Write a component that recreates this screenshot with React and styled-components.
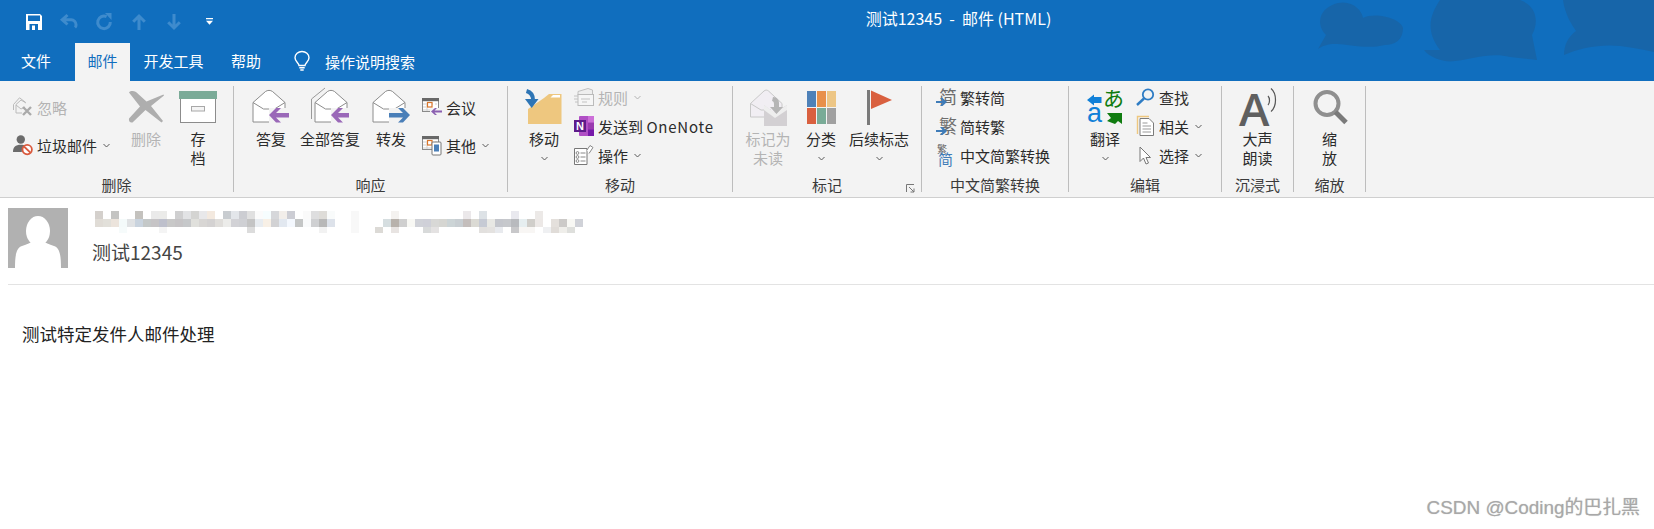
import React from "react";
import styled, { createGlobalStyle } from "styled-components";

const Global = createGlobalStyle`
  html, body { margin: 0; padding: 0; background: #fff; }
  body { font-family: "Noto Sans CJK SC", "Noto Sans", sans-serif; overflow: hidden; }
  svg { display: block; overflow: visible; }
`;

const Page = styled.div`
  position: relative;
  width: 1654px;
  height: 529px;
  overflow: hidden;
  background: #fff;
`;
const Chrome = styled.header`
  position: relative;
  background: #106ebe;
  height: 81px;
  display: flex;
  flex-direction: column;
`;
const Clouds = styled.svg`
  position: absolute;
  top: 0;
  right: 0;
`;
const TitleBar = styled.div`
  position: relative;
  height: 43px;
  display: flex;
  align-items: center;
`;
const Qat = styled.div`
  display: flex;
  align-items: center;
  padding-left: 26px;
`;
const QatSlot = styled.span`
  display: block;
  margin-left: ${p => p.$ml}px;
`;
const Title = styled.div`
  position: absolute;
  left: 0;
  right: 0;
  top: 8px;
  text-align: center;
  padding-left: 263px;
  font-size: 16px;
  line-height: 20px;
  color: #fff;
  white-space: pre;
`;
const TabBar = styled.nav`
  position: relative;
  height: 38px;
  display: flex;
  align-items: stretch;
`;
const Tab = styled.div`
  width: ${p => p.$w}px;
  box-sizing: border-box;
  padding-bottom: 3px;
  padding-right: ${p => p.$pr || 0}px;
  display: flex;
  align-items: center;
  justify-content: center;
  font-size: 15px;
  color: ${p => (p.$active ? "#106ebe" : "#fff")};
  background: ${p => (p.$active ? "#f3f3f3" : "transparent")};
`;
const Search = styled.div`
  display: flex;
  align-items: center;
  margin-left: 18px;
  padding-bottom: 2px;
  gap: 15px;
  font-size: 15px;
  color: #fff;
`;
const Ribbon = styled.section`
  height: 111px;
  padding-top: 5px;
  box-sizing: content-box;
  background: #f3f3f3;
  border-bottom: 1px solid #cfcfcf;
  display: flex;
  align-items: flex-start;
`;
const Group = styled.div`
  position: relative;
  flex: none;
  box-sizing: border-box;
  width: ${p => p.$w}px;
  height: 106px;
  border-right: 1px solid #bdbdbd;
  display: flex;
  flex-direction: column;
`;
const GroupBody = styled.div`
  flex: none;
  height: 89.5px;
  display: flex;
  align-items: flex-start;
  justify-content: ${p => (p.$center ? "center" : "flex-start")};
  padding-left: ${p => p.$pl || 0}px;
`;
const GroupLabel = styled.div`
  height: 18px;
  line-height: 18px;
  font-size: 15px;
  color: #3a3a3a;
  text-align: center;
  white-space: nowrap;
`;
const Launcher = styled.svg`
  position: absolute;
  right: 6px;
  bottom: -1px;
`;
const Big = styled.div`
  flex: none;
  width: ${p => p.$w}px;
  margin-left: ${p => p.$ml || 0}px;
  display: flex;
  flex-direction: column;
  align-items: center;
  font-size: 15px;
  line-height: 19px;
  color: ${p => (p.$off ? "#b4b4b4" : "#2b2b2b")};
`;
const BigIcon = styled.div`
  position: relative;
  height: 42.5px;
  display: flex;
  align-items: center;
  justify-content: center;
`;
const Line = styled.div`
  height: 19px;
  white-space: nowrap;
`;
const ChevronSlot = styled.div`
  height: 19px;
  margin-top: 1.5px;
  display: flex;
  align-items: center;
`;
const Stack = styled.div`
  flex: none;
  width: ${p => (p.$w ? `${p.$w}px` : "auto")};
  margin-left: ${p => p.$ml || 0}px;
  margin-top: ${p => p.$top || 0}px;
  display: flex;
  flex-direction: column;
  gap: ${p => p.$gap}px;
`;
const Row = styled.div`
  height: 26px;
  display: flex;
  align-items: center;
  font-size: 15px;
  white-space: pre;
  color: ${p => (p.$off ? "#b4b4b4" : "#2b2b2b")};
`;
const Latin = styled.span`
  letter-spacing: 0.8px;
`;
const RowIcon = styled.span`
  position: relative;
  flex: none;
  width: 20px;
  height: 20px;
  margin-right: 4px;
  display: flex;
  align-items: center;
  justify-content: center;
`;
const ChevronWrap = styled.span`
  margin-left: ${p => p.$ml || 6}px;
`;
const CharGlyph = styled.span`
  position: absolute;
  left: ${p => p.$x}px;
  top: ${p => p.$y}px;
  font-size: ${p => p.$size}px;
  line-height: 1;
  color: ${p => p.$color};
  font-family: ${p => p.$family || '"Noto Sans CJK SC", sans-serif'};
`;
const CharArrow = styled.svg`
  position: absolute;
  left: ${p => p.$x}px;
  top: ${p => p.$y}px;
`;
const Composite = styled.div`
  position: relative;
  width: ${p => p.$w}px;
  height: ${p => p.$h}px;
`;
const MessageHead = styled.div`
  height: 87px;
  margin-left: 8px;
  box-sizing: border-box;
  padding-top: 10px;
  border-bottom: 1px solid #e3e3e3;
  display: flex;
  align-items: flex-start;
`;
const Avatar = styled.div`
  flex: none;
  width: 60px;
  height: 60px;
  background: #b1b1b1;
  overflow: hidden;
`;
const HeadText = styled.div`
  margin-left: 24px;
  display: flex;
  flex-direction: column;
`;
const Sender = styled.svg`
  margin: 3px 0 0 3px;
`;
const Subject = styled.div`
  margin-top: 5px;
  font-size: 19px;
  line-height: 28px;
  color: #444;
`;
const Message = styled.div`
  padding: 37px 0 0 22px;
  font-size: 17.5px;
  line-height: 24px;
  color: #222;
`;
const Watermark = styled.div`
  position: absolute;
  right: 14px;
  top: 496px;
  font-size: 18.9px;
  line-height: 24px;
  color: #a8a8a8;
  font-family: "Liberation Sans", "Noto Sans CJK SC", sans-serif;
  text-shadow: 0 0 1px rgba(160, 160, 160, 0.6);
`;

const Chevron = ({ c = "#5a5a5a" }) => (
  <svg width="7" height="5" viewBox="0 0 7 5"><path d="M.5 1 3.5 4l3-3" fill="none" stroke={c} strokeWidth="1" /></svg>
);

const Save = () => (
  <svg width="16" height="16" viewBox="0 0 16 16">
    <path d="M0 0h14l2 2v14H0z" fill="#fff" />
    <rect x="2" y="1.5" width="12" height="5.5" fill="#106ebe" />
    <rect x="3.5" y="10" width="8.5" height="6" fill="#106ebe" />
    <rect x="6" y="11.5" width="3" height="4.5" fill="#fff" />
  </svg>
);
const OFF = "#3e8bcd";
const Undo = () => (
  <svg width="18" height="15" viewBox="0 0 18 15">
    <path d="M7.5 1 2.2 5.800 7.500 10.500M3 5.800h8.200a4.800 4.800 0 0 1 4.800 4.800v.6a3 3 0 0 1-1 2.300" fill="none" stroke={OFF} strokeWidth="3" />
  </svg>
);
const Redo = () => (
  <svg width="16" height="17" viewBox="0 0 16 17">
    <path d="M10.600 3.600A6.300 6.300 0 1 0 14.300 9" fill="none" stroke={OFF} strokeWidth="3" />
    <path d="M9 0h6.500v7z" fill={OFF} />
  </svg>
);
const Up = () => (
  <svg width="14" height="16" viewBox="0 0 14 16">
    <path d="M7 16V2M1.200 7.800 7 2l5.800 5.800" fill="none" stroke={OFF} strokeWidth="3" />
  </svg>
);
const Down = () => (
  <svg width="14" height="16" viewBox="0 0 14 16">
    <path d="M7 0v14M1.200 8.200 7 14l5.800-5.800" fill="none" stroke={OFF} strokeWidth="3" />
  </svg>
);
const Custom = () => (
  <svg width="7" height="7" viewBox="0 0 7 7">
    <path d="M0 0h7v1.200H0zM0 2.800h7L3.500 6.800z" fill="#fff" />
  </svg>
);
const Bulb = () => (
  <svg width="16" height="21" viewBox="0 0 16 21">
    <path d="M5 14.500c0-2.500-4-4-4-7.700a7 6.300 0 0 1 14 0c0 3.700-4 5.200-4 7.700zM5.300 16.800h5.400M6.300 19h3.400" fill="none" stroke="#fff" strokeWidth="1.400" />
  </svg>
);

const Ignore = () => (
  <svg width="20" height="20" viewBox="0 0 20 20">
    <g fill="none" stroke="#bbb" strokeWidth="1">
      <path d="M.5 7.500 6.500.8l6 4.500" />
      <path d="M.5 7.500V13M3 7.500 8 3l5 3M3 7.500V16h6M3 8l5 4 4-2" />
    </g>
    <path d="M10 10l8 8M18 10l-8 8" stroke="#aaa" strokeWidth="2.400" />
  </svg>
);
const Junk = () => (
  <svg width="20" height="20" viewBox="0 0 20 20">
    <circle cx="7.800" cy="4.500" r="4.200" fill="#6b6b6b" />
    <path d="M0 17c0-5 2.500-7.200 7.800-7.200 2 0 3.500.4 4.500 1-2.200 1.300-3.600 3.400-3.500 6.200z" fill="#6b6b6b" />
    <circle cx="14.200" cy="14.600" r="4.700" fill="#fff" stroke="#d9593d" strokeWidth="1.800" />
    <path d="M11 11.500l6.400 6.200" stroke="#d9593d" strokeWidth="1.800" />
  </svg>
);
const BigX = () => (
  <svg width="36" height="32" viewBox="0 0 36 32">
    <path d="M1 1.500C2.500-.5 5.500-.3 8 1l10.500 9.500L35.500 3.500 36 4.500 23 15l12 15-1.500 1.500L17.500 19 4.500 31.500C2 32 .5 30 1 27.500L12 15.500z" fill="#aeaeae" />
  </svg>
);
const Archive = () => (
  <svg width="38" height="32" viewBox="0 0 38 32">
    <rect x="1.500" y="7" width="35" height="24.500" fill="#fff" stroke="#8c8c8c" />
    <rect width="38" height="8" fill="#7bab98" />
    <rect x="12.500" y="15.500" width="13" height="4.500" fill="#f4f4f4" stroke="#a8a8a8" />
  </svg>
);
const EnvBody = ({ dx }) => (
  <g transform={`translate(${dx} 2)`}>
    <path d="M.5 13.500 13 2.500c2-1.500 5-1.500 7 0l12.500 11V33H.5z" fill="#fff" stroke="#8c8c8c" />
    <path d="M.5 13.500 11 20h11l10.500-6.500" fill="none" stroke="#8c8c8c" />
  </g>
);
const Reply = () => (
  <svg width="38" height="40" viewBox="0 0 38 40">
    <EnvBody dx={0.5} />
    <rect x="17" y="21" width="21" height="16" fill="#f3f3f3" />
    <path d="M17 28l7-7h5l-5 5h13v4.500H24l5 5h-5z" fill="#9a68b8" />
  </svg>
);
const ReplyAll = () => (
  <svg width="40" height="40" viewBox="0 0 40 40">
    <path d="M1.500 32V12L15 1" fill="none" stroke="#9a9a9a" />
    <EnvBody dx={4.5} />
    <rect x="21" y="21" width="19" height="16" fill="#f3f3f3" />
    <path d="M21 28l7-7h5l-5 5h11v4.500H28l5 5h-5z" fill="#9a68b8" />
  </svg>
);
const Forward = () => (
  <svg width="38" height="40" viewBox="0 0 38 40">
    <EnvBody dx={0.5} />
    <rect x="17" y="21" width="21" height="16" fill="#f3f3f3" />
    <path d="M38 28l-7-7h-5l5 5H17v4.500h14l-5 5h5z" fill="#4a7fb8" />
  </svg>
);
const Cal = ({ children }) => (
  <svg width="20" height="20" viewBox="0 0 20 20">
    <rect x=".5" y="1.500" width="16" height="13" fill="#fff" stroke="#8a8a8a" />
    <rect y="1" width="17" height="3.200" fill="#686868" />
    <path d="M1 7h3M1 10h3M1 13h14M5 6v8M10 6v2M14 6v2" stroke="#cfcfcf" strokeWidth="1" />
    <rect x="5.500" y="5.500" width="4.500" height="4.500" fill="#fff" stroke="#d9762c" strokeWidth="1.200" />
    {children}
  </svg>
);
const Meeting = () => (
  <Cal>
    <rect x="8" y="11" width="12" height="8" fill="#f3f3f3" />
    <path d="M9 14.500l4-3.500h2l-2.500 2.500H20v2h-7.500l2.500 2.500h-2z" fill="#8a5fb0" />
  </Cal>
);
const Other = () => (
  <Cal>
    <rect x="10" y="7" width="9" height="13" rx="1" fill="#fff" stroke="#777" />
    <rect x="12" y="9.500" width="5" height="7" fill="#4a7fb8" />
  </Cal>
);
const Folder = () => (
  <svg width="38" height="36" viewBox="0 0 38 36">
    <path d="M3 35V20L19 9l5-4h12.500v30z" fill="#eec77f" />
    <path d="M25.500 8.500 28 6h7v2.500z" fill="#fff" />
    <path d="M1.500 2C5 3 8 5.500 8 11" fill="none" stroke="#2e75b5" strokeWidth="4" />
    <path d="M0 10h13.500l-6.800 9z" fill="#2e75b5" />
  </svg>
);
const Rules = () => (
  <svg width="20" height="19" viewBox="0 0 20 19">
    <path d="M4 7V3.500L14 .5l4.500 1.500v5" fill="#eee" stroke="#c0c0c0" />
    <rect x="4" y="6.500" width="15.500" height="11" fill="#f6f6f6" stroke="#bbb" />
    <path d="M7 11h9M0 8h4M0 11h4M1 14h3M8 14h5" stroke="#c2c2c2" />
  </svg>
);
const OneNote = () => (
  <svg width="20" height="20" viewBox="0 0 20 20">
    <rect x="5" y="0" width="15" height="20" rx="1" fill="#b04fc5" />
    <rect x="14" y="0" width="6" height="6.700" fill="#cc6fd8" />
    <rect x="14" y="6.700" width="6" height="6.700" fill="#9a3bb0" />
    <rect x="14" y="13.400" width="6" height="6.600" fill="#7719aa" />
    <rect x="0" y="4" width="12" height="12" fill="#5e1b8b" />
    <text x="6" y="14" textAnchor="middle" fontSize="11" fontWeight="700" fill="#fff" fontFamily="Liberation Sans">N</text>
  </svg>
);
const Ops = () => (
  <svg width="20" height="20" viewBox="0 0 20 20">
    <path d="M.5 3.500H13v16H.5z" fill="#fff" stroke="#777" />
    <path d="M13 5l3-4.500 3 2-4 6" fill="#fff" stroke="#888" />
    <circle cx="3.500" cy="8" r="1.400" fill="none" stroke="#888" />
    <circle cx="3.500" cy="12" r="1.400" fill="none" stroke="#888" />
    <circle cx="3.500" cy="16" r="1.400" fill="none" stroke="#888" />
    <path d="M6.500 8h5M6.500 12h5M6.500 16h5" stroke="#888" />
  </svg>
);
const Unread = () => (
  <svg width="37" height="37" viewBox="0 0 37 37">
    <path d="M.5 14.500 14 2c1.500-1.200 3-1.200 4.500 0L32 14.500V28H.5z" fill="#f1eef3" stroke="#c8c8c8" />
    <path d="M.5 14.500 11 21h10" fill="none" stroke="#c8c8c8" />
    <path d="M14 37V16l10 8 13-8v21z" fill="#d3d0d3" />
    <path d="M14 16l11 8 12-8v5l-12 8-11-8z" fill="#eeeeee" />
    <path d="M23 8c4 0 6 3 6 6v4h4l-6.500 7-6.500-7h4v-3c0-2-1-3-2-3z" fill="#b5b5b5" />
  </svg>
);
const Cats = () => {
  const c = ["#4e81b8", "#e8904a", "#edc685", "#d9603f", "#79ab97", "#a0a0a0"];
  return (
    <svg width="29" height="33" viewBox="0 0 29 33">
      {c.map((f, i) => (
        <rect key={f} x={(i % 3) * 10} y={i < 3 ? 0 : 17} width="9" height="16" fill={f} />
      ))}
    </svg>
  );
};
const Flag = () => (
  <svg width="25" height="35" viewBox="0 0 25 35">
    <rect x="0" y="0" width="3" height="35" fill="#7a7a7a" />
    <path d="M4 .5 25 10 4 19z" fill="#d9603f" />
  </svg>
);
const BlueArrow = ({ x = 0, y = 10 }) => (
  <CharArrow $x={x} $y={y} width="11" height="10" viewBox="0 0 11 10">
    <path d="M0 4h6.500L4 1h2.500L11 5 6.500 9H4l2.500-3H0z" fill="#3f7cb8" />
  </CharArrow>
);
const SimpTrad = () => (
  <svg width="20" height="22" viewBox="0 0 20 22">
    <text x="1" y="9" fontSize="10" fill="#5e5e5e" fontFamily="Noto Sans CJK SC">繁</text>
    <text x="2" y="21" fontSize="15" fill="#3f7cb8" fontFamily="Noto Sans CJK SC">简</text>
  </svg>
);
const Translate = () => (
  <Composite $w={36} $h={38}>
    <CharGlyph $x={16} $y={-1} $size={21} $color="#107c10" $family='"Noto Sans CJK JP", sans-serif'>あ</CharGlyph>
    <CharGlyph $x={0} $y={12} $size={27} $color="#1080d8" $family='"Liberation Sans", sans-serif'>a</CharGlyph>
    <CharArrow $x={0} $y={6} width="15" height="12" viewBox="0 0 15 12">
      <path d="M0 6 7 .5V3h7.500v6H7v2.500z" fill="#1080d8" />
    </CharArrow>
    <CharArrow $x={19} $y={24} width="16" height="13" viewBox="0 0 16 13">
      <path d="M1 1h15v11l-4-3-3 3-8-3 4-3z" fill="#107c10" />
    </CharArrow>
  </Composite>
);
const Find = () => (
  <svg width="19" height="18" viewBox="0 0 19 18">
    <circle cx="12" cy="6.500" r="5.200" fill="none" stroke="#2e7cc4" strokeWidth="1.800" />
    <path d="M8 10.500 1 17" stroke="#2e7cc4" strokeWidth="2.400" />
  </svg>
);
const Related = () => (
  <svg width="17" height="20" viewBox="0 0 17 20">
    <path d="M.5 18V.5H12" fill="none" stroke="#eec77f" strokeWidth="1.400" />
    <path d="M3 2.500h9l4.500 4.500v12.500H3z" fill="#fff" stroke="#7b7b7b" />
    <path d="M5.500 7h5M5.500 10h8.500M5.500 13h8.500M5.500 16h8.500" stroke="#999" />
  </svg>
);
const Select = () => (
  <svg width="12" height="19" viewBox="0 0 12 19">
    <path d="M1 1v14.500L4.500 12l2.500 6 2.500-1-2.500-5.500h4.500z" fill="#fff" stroke="#777" />
  </svg>
);
const Speak = () => (
  <svg width="38" height="40" viewBox="0 0 38 40">
    <text x="0" y="39" fontSize="46" fontWeight="600" fill="#5f5f5f" fontFamily="Open Sans">A</text>
    <path d="M29 9c2 2 2 7 0 9M32 1.500c6 5 6 18 0 23" fill="none" stroke="#555" strokeWidth="1.200" />
  </svg>
);
const Zoom = () => (
  <svg width="34" height="34" viewBox="0 0 34 34">
    <circle cx="14" cy="13.500" r="11.500" fill="none" stroke="#8f8f8f" strokeWidth="4" />
    <path d="M22.500 22 33 32.500" stroke="#7a7a7a" strokeWidth="5" />
  </svg>
);

const W = "#fff";
const row0 = { 0:"#d4d0cc",2:"#c4c4c2",5:"#c4c2be",7:"#eaeaea",8:"#ebebe9",10:"#cfcfd0",11:"#e2e3e5",12:"#d4d4d2",13:"#e8e8ea",14:"#f3e9df",16:"#c8ccd0",17:"#e3e6ea",18:"#cccdd2",19:"#e0e0e0",20:"#fbfbfb",21:"#f6fdfe",22:"#d6d7da",23:"#f2eeea",24:"#cccdd4",26:"#fafafa",27:"#dededf",28:"#dedcd8",29:"#f9fbfb",32:"#f8f8f8",37:"#f4f2f0",46:"#ebe8ea",48:"#dde2e6",52:"#e9e9ef",55:"#ece9e7" };
const row1 = ["#e0dcd6","#e2e0da","#ece4dc","#f4fafa","#e0e2e4","#c9d3de","#c4c8c8","#c6c4c6","#bec0cc","#c8c8c8","#c6c4c6","#c6c8ca","#e0e0dc","#d8d6d4","#d4d2d2","#e0dedb","#ececea","#d2d2d6","#cfd0d4","#c4c4c4","#e8ecf0","#f8f0e6","#d2d2d4","#e2e8f0","#f4f8fe","#c4c6c6","#f9fafb","#cfd0d2","#b8b8b8","#dde2ea",W,W,"#f8f8f8",W,W,W,"#d6dee0","#b8b2ac","#cfcfcf","#f8f8f4","#d0d2d8","#cfd0d8","#d8d8d6","#d6d6d2","#ccd4d6","#c8ced2","#c4bebc","#dbdad4","#c6cad4","#e8e8e4","#c4c6cc","#c6c8cc","#b8babe","#e6eef0","#d0ceca","#ece8e6",W,"#e4e0dc","#cccac8","#f8f8f4","#d0d2d8"];
const row2 = { 3:"#f6fbfb",8:"#f4f4f4",19:"#dcdcdc",28:"#f2f2f2",32:"#f8f8f8",35:"#dcdad6",37:"#e8e4e2",41:"#d8dada",42:"#e4e2e2",48:"#e2e0de",49:"#e4e2e0",50:"#e8eaee",52:"#c8c8ca",53:"#f8f6f4",54:"#f8f6f4",56:"#eff0f2",57:"#e0dcd8",58:"#efeeea",59:"#dedfdc" };

const Redacted = () => (
  <Sender width="488" height="22" viewBox="0 0 488 22" shapeRendering="crispEdges">
    {Object.entries(row0).map(([c, f]) => <rect key={`a${c}`} x={c * 8} y="0" width="8" height="8" fill={f} />)}
    {row1.map((f, c) => <rect key={`b${c}`} x={c * 8} y="8" width="8" height="8" fill={f} />)}
    {Object.entries(row2).map(([c, f]) => <rect key={`c${c}`} x={c * 8} y="16" width="8" height="6" fill={f} />)}
  </Sender>
);

export default function App() {
  return (
    <Page>
      <Global />
      <Chrome>
        <Clouds width="404" height="81" viewBox="0 0 404 81">
          <g fill="#1765a9">
            <path d="M68 49 76 35C66 25 68 8 88 3c14-3 24 7 25 15 12-6 37 0 40 10 0 12-8 17-18 17-20 5-40-2-50-1-7 0-13 2-17 5z" />
            <path d="M174 50c6 8 21 13 31 11 15-1 35-9 55-4l27 3-5-25c8-15 3-30-12-35h-80c-10 15-15 30 0 50z" />
            <path d="M313 0c2 15 9 25 13 31-8 6-12 14-12 24 16-7 36-11 56-9 15 2 25 4 34 6V0z" />
          </g>
        </Clouds>
        <TitleBar>
          <Qat>
            <Save />
            <QatSlot $ml={18}><Undo /></QatSlot>
            <QatSlot $ml={18}><Redo /></QatSlot>
            <QatSlot $ml={20}><Up /></QatSlot>
            <QatSlot $ml={21}><Down /></QatSlot>
            <QatSlot $ml={25}><Custom /></QatSlot>
          </Qat>
          <Title>测试12345  -  邮件 (HTML)</Title>
        </TitleBar>
        <TabBar>
          <Tab $w={75} $pr={3}>文件</Tab>
          <Tab $w={55} $active>邮件</Tab>
          <Tab $w={88} $pr={1}>开发工具</Tab>
          <Tab $w={58} $pr={2}>帮助</Tab>
          <Search><Bulb />操作说明搜索</Search>
        </TabBar>
      </Chrome>

      <Ribbon>
        <Group $w={234}>
          <GroupBody $pl={13}>
            <Stack $w={103} $top={8} $gap={12}>
              <Row $off><RowIcon><Ignore /></RowIcon>忽略</Row>
              <Row><RowIcon><Junk /></RowIcon>垃圾邮件<ChevronWrap><Chevron /></ChevronWrap></Row>
            </Stack>
            <Big $w={60} $off><BigIcon><BigX /></BigIcon><Line>删除</Line></Big>
            <Big $w={44}><BigIcon><Archive /></BigIcon><Line>存</Line><Line>档</Line></Big>
          </GroupBody>
          <GroupLabel>删除</GroupLabel>
        </Group>

        <Group $w={274}>
          <GroupBody $pl={14}>
            <Big $w={46}><BigIcon><Reply /></BigIcon><Line>答复</Line></Big>
            <Big $w={72}><BigIcon><ReplyAll /></BigIcon><Line>全部答复</Line></Big>
            <Big $w={50}><BigIcon><Forward /></BigIcon><Line>转发</Line></Big>
            <Stack $ml={6} $top={8} $gap={12}>
              <Row><RowIcon><Meeting /></RowIcon>会议</Row>
              <Row><RowIcon><Other /></RowIcon>其他<ChevronWrap><Chevron /></ChevronWrap></Row>
            </Stack>
          </GroupBody>
          <GroupLabel>响应</GroupLabel>
        </Group>

        <Group $w={225}>
          <GroupBody $pl={14}>
            <Big $w={44}>
              <BigIcon><Folder /></BigIcon>
              <Line>移动</Line>
              <ChevronSlot><Chevron /></ChevronSlot>
            </Big>
            <Stack $ml={8} $top={-2} $gap={3}>
              <Row $off><RowIcon><Rules /></RowIcon>规则<ChevronWrap><Chevron c="#b4b4b4" /></ChevronWrap></Row>
              <Row><RowIcon><OneNote /></RowIcon>发送到 <Latin>OneNote</Latin></Row>
              <Row><RowIcon><Ops /></RowIcon>操作<ChevronWrap><Chevron /></ChevronWrap></Row>
            </Stack>
          </GroupBody>
          <GroupLabel>移动</GroupLabel>
        </Group>

        <Group $w={189}>
          <GroupBody $pl={13}>
            <Big $w={44} $off><BigIcon><Unread /></BigIcon><Line>标记为</Line><Line>未读</Line></Big>
            <Big $w={40} $ml={11}><BigIcon><Cats /></BigIcon><Line>分类</Line><ChevronSlot><Chevron /></ChevronSlot></Big>
            <Big $w={60} $ml={8}><BigIcon><Flag /></BigIcon><Line>后续标志</Line><ChevronSlot><Chevron /></ChevronSlot></Big>
          </GroupBody>
          <GroupLabel>标记</GroupLabel>
          <Launcher width="9" height="9" viewBox="0 0 9 9">
            <path d="M.5 8V.5H8M3 3l5 5M8 4.500V8H4.500" fill="none" stroke="#777" />
          </Launcher>
        </Group>

        <Group $w={147}>
          <GroupBody $pl={14}>
            <Stack $top={-2} $gap={3}>
              <Row>
                <RowIcon>
                  <CharGlyph $x={3} $y={0} $size={18} $color="#6e6e6e">简</CharGlyph>
                  <BlueArrow />
                </RowIcon>繁转简
              </Row>
              <Row>
                <RowIcon>
                  <CharGlyph $x={3} $y={0} $size={18} $color="#6e6e6e">繁</CharGlyph>
                  <BlueArrow />
                </RowIcon>简转繁
              </Row>
              <Row>
                <RowIcon><SimpTrad /></RowIcon>中文简繁转换
              </Row>
            </Stack>
          </GroupBody>
          <GroupLabel>中文简繁转换</GroupLabel>
        </Group>

        <Group $w={153}>
          <GroupBody $pl={15}>
            <Big $w={42}><BigIcon><Translate /></BigIcon><Line>翻译</Line><ChevronSlot><Chevron /></ChevronSlot></Big>
            <Stack $ml={9} $top={-2} $gap={3}>
              <Row><RowIcon><Find /></RowIcon>查找</Row>
              <Row><RowIcon><Related /></RowIcon>相关<ChevronWrap><Chevron /></ChevronWrap></Row>
              <Row><RowIcon><Select /></RowIcon>选择<ChevronWrap><Chevron /></ChevronWrap></Row>
            </Stack>
          </GroupBody>
          <GroupLabel>编辑</GroupLabel>
        </Group>

        <Group $w={72}>
          <GroupBody $center>
            <Big $w={50}><BigIcon><Speak /></BigIcon><Line>大声</Line><Line>朗读</Line></Big>
          </GroupBody>
          <GroupLabel>沉浸式</GroupLabel>
        </Group>

        <Group $w={72}>
          <GroupBody $center>
            <Big $w={50}><BigIcon><Zoom /></BigIcon><Line>缩</Line><Line>放</Line></Big>
          </GroupBody>
          <GroupLabel>缩放</GroupLabel>
        </Group>
      </Ribbon>

      <MessageHead>
        <Avatar>
          <svg width="60" height="60" viewBox="0 0 60 60">
            <ellipse cx="30" cy="23" rx="12" ry="15" fill="#fff" />
            <path d="M7 60c0-12 1-20 7-22 5-2 9-3 11-5h10c2 2 6 3 11 5 6 2 7 10 7 22z" fill="#fff" />
          </svg>
        </Avatar>
        <HeadText>
          <Redacted />
          <Subject>测试12345</Subject>
        </HeadText>
      </MessageHead>
      <Message>测试特定发件人邮件处理</Message>
      <Watermark>CSDN @Coding的巴扎黑</Watermark>
    </Page>
  );
}
